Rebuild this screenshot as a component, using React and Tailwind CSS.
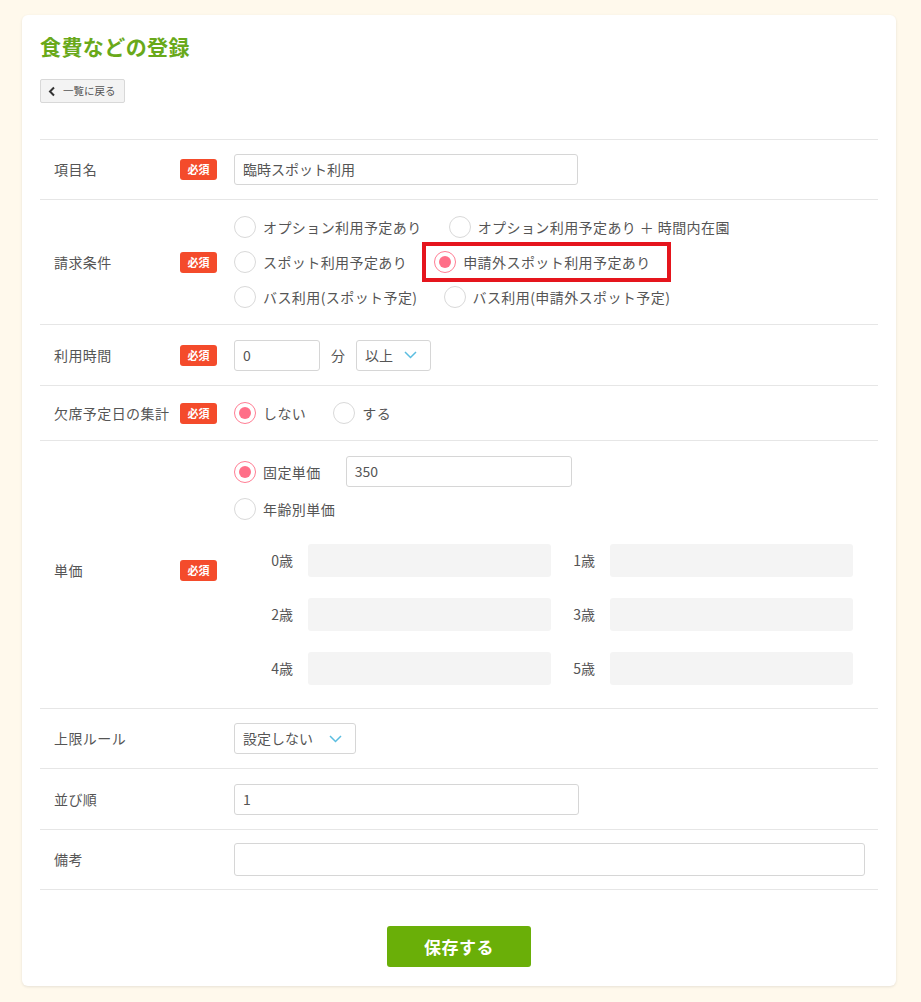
import React from 'react';

const font = { fontFamily: '"Noto Sans CJK JP", "Noto Sans", sans-serif' };

function Badge() {
  return (
    <span className="inline-flex items-center justify-center w-[37px] h-[21px] rounded-[3px] bg-[#f44b2b] text-white text-[11px] font-bold leading-none">
      必須
    </span>
  );
}

function Radio({ checked, label, className = '' }) {
  return (
    <label className={`flex items-center h-[22px] ${className}`}>
      <span
        className={`flex items-center justify-center w-[22px] h-[22px] rounded-full border bg-white ${
          checked ? 'border-[#ff7d93]' : 'border-[#d9d9d9]'
        }`}
      >
        {checked && <span className="w-[12px] h-[12px] rounded-full bg-[#ff6f88]" />}
      </span>
      <span className="ml-[7px] text-[14px] leading-[20px] tracking-[0.03em] text-[#555]">{label}</span>
    </label>
  );
}

function Chevron() {
  return (
    <svg width="13" height="8" viewBox="0 0 13 8" fill="none" className="ml-auto">
      <path d="M1 1l5.5 5.5L12 1" stroke="#5bbde0" strokeWidth="1.5" />
    </svg>
  );
}

function Row({ label, required, children, className = '' }) {
  return (
    <div className={`flex items-center border-b border-[#e6e6e6] ${className}`}>
      <div className="w-[140px] pl-[14px] text-[14px] tracking-[0.03em] text-[#555] shrink-0">{label}</div>
      <div className="w-[54px] shrink-0 flex">{required && <Badge />}</div>
      <div className="flex-1">{children}</div>
    </div>
  );
}

const inputCls =
  'h-[31px] border border-[#d6d6d6] rounded-[3px] bg-white px-[8px] flex items-center text-[14px] text-[#555]';

export default function App() {
  const ages = ['0歳', '1歳', '2歳', '3歳', '4歳', '5歳'];
  return (
    <div className="min-h-screen bg-[#fff9ec] pt-[15px] pb-[16px]" style={font}>
      <div className="ml-[22px] w-[874px] bg-white rounded-[6px] shadow-[0_1px_3px_rgba(0,0,0,0.1)] pt-[16px] pb-[19px] pl-[18px] pr-[18px]">
        <h1 className="text-[21px] leading-[30px] font-bold text-[#69a91a] tracking-[0.02em]">食費などの登録</h1>

        <button className="mt-[18px] h-[24px] w-[85px] flex items-center pl-[7px] bg-[#f3f3f3] border border-[#d8d8d8] rounded-[2px] text-[#555]">
          <svg width="8" height="11" viewBox="0 0 8 11" fill="none">
            <path d="M6 1.5L2 5.5l4 4" stroke="#333" strokeWidth="2" />
          </svg>
          <span className="ml-[7px] text-[10.5px] leading-none">一覧に戻る</span>
        </button>

        <div className="mt-[36px] border-t border-[#e6e6e6]">
          <Row label="項目名" required className="h-[60px]">
            <div className={`${inputCls} w-[344px]`}>臨時スポット利用</div>
          </Row>

          <Row label="請求条件" required className="pt-[16px] pb-[16px]">
            <div className="flex flex-col gap-[13px]">
              <div className="flex">
                <Radio label="オプション利用予定あり" className="mr-[27px]" />
                <Radio label="オプション利用予定あり ＋ 時間内在園" />
              </div>
              <div className="flex">
                <Radio label="スポット利用予定あり" className="mr-[27px]" />
                <div className="relative flex">
                  <div className="absolute left-[-12px] right-[-20px] top-[-9px] bottom-[-9px] border-[4px] border-[#e5151d]" />
                  <Radio checked label="申請外スポット利用予定あり" className="relative" />
                </div>
              </div>
              <div className="flex">
                <Radio label="バス利用(スポット予定)" className="mr-[26px]" />
                <Radio label="バス利用(申請外スポット予定)" />
              </div>
            </div>
          </Row>

          <Row label="利用時間" required className="h-[61px]">
            <div className="flex items-center">
              <div className={`${inputCls} w-[86px]`}>0</div>
              <span className="ml-[11px] text-[14px] text-[#555]">分</span>
              <div className={`${inputCls} ml-[11px] w-[75px] pr-[13px]`}>
                <span>以上</span>
                <Chevron />
              </div>
            </div>
          </Row>

          <Row label="欠席予定日の集計" required className="h-[55px]">
            <div className="flex">
              <Radio checked label="しない" className="mr-[27px]" />
              <Radio label="する" />
            </div>
          </Row>

          <Row label="単価" required className="pt-[15px] pb-[23px]">
            <div className="flex items-center">
              <Radio checked label="固定単価" />
              <div className={`${inputCls} ml-[25px] w-[226px]`}>350</div>
            </div>
            <div className="mt-[11px] flex">
              <Radio label="年齢別単価" />
            </div>
            <div className="mt-[24px] pl-[22px] grid grid-cols-[295px_295px] gap-x-[7px] gap-y-[21px]">
              {ages.map((a) => (
                <div key={a} className="flex items-center">
                  <span className="w-[37px] text-right text-[14px] text-[#555]">{a}</span>
                  <div className="ml-[15px] w-[243px] h-[33px] rounded-[3px] bg-[#f4f4f4]" />
                </div>
              ))}
            </div>
          </Row>

          <Row label="上限ルール" className="h-[60px]">
            <div className={`${inputCls} w-[122px] pr-[13px]`}>
              <span>設定しない</span>
              <Chevron />
            </div>
          </Row>

          <Row label="並び順" className="h-[61px]">
            <div className={`${inputCls} w-[345px]`}>1</div>
          </Row>

          <Row label="備考" className="h-[60px]">
            <div className={`${inputCls} w-[631px] h-[33px]`} />
          </Row>
        </div>

        <div className="mt-[36px] flex justify-center">
          <button className="w-[144px] h-[41px] rounded-[3px] bg-[#6aaf08] text-white text-[17px] font-bold tracking-[0.03em]">
            保存する
          </button>
        </div>
      </div>
    </div>
  );
}
